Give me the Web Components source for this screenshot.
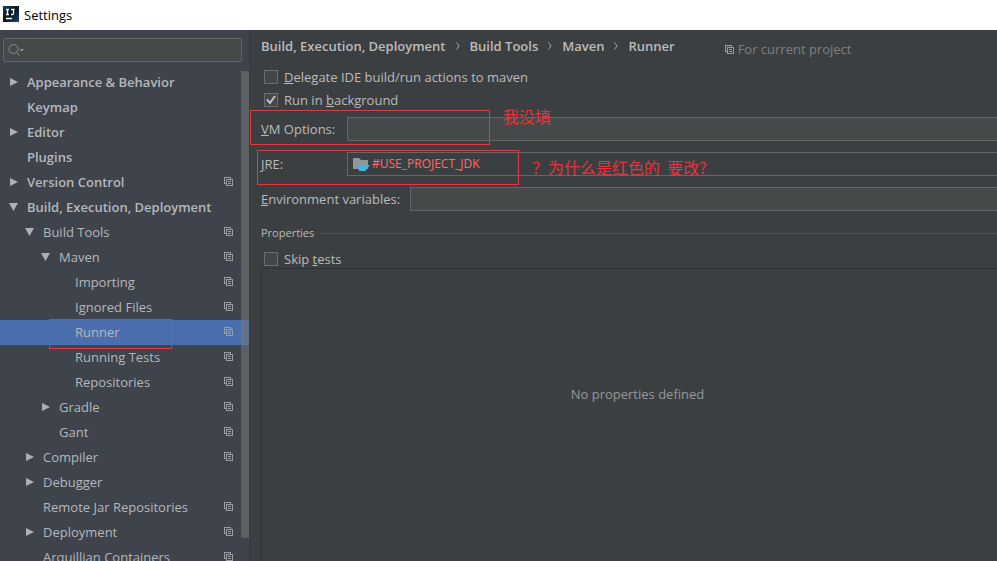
<!DOCTYPE html>
<html lang="en">
<head>
<meta charset="utf-8">
<title>Settings</title>
<style>
  html, body {
    height: 100%;
    margin: 0;
  }

  body {
    overflow: hidden;
    background: #3c3f41;
    font-family: "Open Sans", "Noto Sans CJK SC", sans-serif;
    font-size: 13px;
    line-height: 18px;
    color: #bbbbbb;
  }
</style>
</head>
<body>
<settings-window></settings-window>

<script>
// Small "project level setting" icon: two overlapping sheets
class ProjectIcon extends HTMLElement {
  constructor() {
    super();
    const shadow = this.attachShadow({ mode: 'open' });
    shadow.innerHTML = `
      <style>
        :host { display: block; flex: none; width: 9px; height: 9px; color: #9a9da1; }
        svg { display: block; }
      </style>
      <svg width="9" height="9" viewBox="0 0 9 9" fill="none" stroke="currentColor" shape-rendering="crispEdges">
        <path d="M1.5 6.5H.5V.5H6.5V1.5"/>
        <path d="M2.5 2.5H8.5V8.5H2.5ZM4 4.5H7M4 6.5H7"/>
      </svg>`;
  }
}
customElements.define('project-icon', ProjectIcon);

class TitleBar extends HTMLElement {
  constructor() {
    super();
    const shadow = this.attachShadow({ mode: 'open' });
    shadow.innerHTML = `
      <style>
        :host {
          display: flex;
          align-items: center;
          gap: 5px;
          flex: none;
          height: 30px;
          padding-left: 3px;
          background: #ffffff;
          color: #000000;
        }
        svg { display: block; margin-bottom: 2px; }
      </style>
      <svg width="16" height="16" viewBox="0 0 16 16">
        <defs>
          <linearGradient id="g" x1="0" y1="0" x2="1" y2="1">
            <stop offset="0" stop-color="#173d5c"/>
            <stop offset=".5" stop-color="#07131f"/>
            <stop offset="1" stop-color="#1b4a70"/>
          </linearGradient>
        </defs>
        <rect width="16" height="16" fill="url(#g)"/>
        <path d="M3 3.5H6M4.500 3.500V8.500M3 8.500H6M8 3.500H11.500M10.500 3.500V7.500Q10.500 8.500 9.500 8.500H8M3 12.500H9" fill="none" stroke="#fff" stroke-width="1.300"/>
      </svg>
      <slot></slot>`;
  }
}
customElements.define('title-bar', TitleBar);

class SearchBox extends HTMLElement {
  constructor() {
    super();
    const shadow = this.attachShadow({ mode: 'open' });
    shadow.innerHTML = `
      <style>
        :host {
          display: flex;
          align-items: center;
          box-sizing: border-box;
          height: 24px;
          padding-left: 4px;
          border: 1px solid #646768;
          border-radius: 2px;
          background: #45494a;
        }
        svg { flex: none; }
        input {
          flex: 1;
          min-width: 0;
          border: 0;
          outline: 0;
          background: transparent;
          font: inherit;
          color: inherit;
        }
      </style>
      <svg width="17" height="14" viewBox="0 0 17 14" fill="none" stroke="#8a8d8f">
        <circle cx="5.500" cy="6" r="4.500"/>
        <path d="M8.500 9.500L11.500 12.500"/>
        <path d="M11.500 6H16L13.700 8.500Z" fill="#8a8d8f" stroke="none"/>
      </svg>
      <input type="text" aria-label="Search settings">`;
  }
}
customElements.define('search-box', SearchBox);

// One line of the settings tree: level, state (open / closed), bold, project, selected
class TreeRow extends HTMLElement {
  constructor() {
    super();
    const shadow = this.attachShadow({ mode: 'open' });
    shadow.innerHTML = `
      <style>
        :host {
          display: flex;
          align-items: center;
          flex: none;
          box-sizing: border-box;
          height: 25px;
          padding: 0 16px 2px calc(9px + var(--level, 0) * 16px);
          color: #b4b8bd;
        }
        :host([bold]) { font-weight: 600; }
        :host([selected]) { background: #4b6eaf; }
        .arrow { flex: none; width: 18px; height: 10px; }
        .arrow path { display: none; fill: #adb1b6; }
        :host([state="closed"]) .closed,
        :host([state="open"]) .open { display: inline; }
        .text { flex: 1; white-space: nowrap; }
        project-icon { display: none; }
        :host([project]) project-icon { display: block; }
      </style>
      <svg class="arrow" viewBox="0 0 18 10">
        <path class="closed" d="M1 1L9 5L1 9Z"/>
        <path class="open" d="M0 1H9L4.500 9Z"/>
      </svg>
      <span class="text"><slot></slot></span>
      <project-icon></project-icon>`;
  }

  connectedCallback() {
    this.style.setProperty('--level', this.getAttribute('level') || 0);
  }
}
customElements.define('tree-row', TreeRow);

class SettingsSidebar extends HTMLElement {
  constructor() {
    super();
    const shadow = this.attachShadow({ mode: 'open' });
    shadow.innerHTML = `
      <style>
        :host {
          display: flex;
          flex-direction: column;
          flex: none;
          box-sizing: border-box;
          position: relative;
          width: 250px;
          padding-top: 8px;
          overflow: hidden;
          background: #3e434c;
          border-right: 1px solid #393c3f;
        }
        search-box { flex: none; margin: 0 7px 8px 3px; }
        .tree { display: flex; flex-direction: column; }
        /* Scrollbar thumb, over the rows */
        .thumb {
          position: absolute;
          top: 41px;
          right: 0;
          bottom: 23px;
          width: 8px;
          background: rgba(115, 117, 115, 0.6);
        }
      </style>
      <search-box></search-box>
      <div class="tree"><slot></slot></div>
      <div class="thumb"></div>`;
  }
}
customElements.define('settings-sidebar', SettingsSidebar);

class CheckRow extends HTMLElement {
  constructor() {
    super();
    const shadow = this.attachShadow({ mode: 'open' });
    shadow.innerHTML = `
      <style>
        :host { display: flex; height: 23px; padding-left: 3px; }
        label { display: flex; align-items: center; gap: 6px; }
        input {
          appearance: none;
          box-sizing: border-box;
          width: 14px;
          height: 14px;
          margin: 0;
          border: 1px solid #6b6e70;
          background: #43474a;
        }
        input:checked {
          background: #43474a url("data:image/svg+xml,%3Csvg xmlns='http://www.w3.org/2000/svg' viewBox='0 0 12 12'%3E%3Cpath d='M2 5.500L5 9L10 2' fill='none' stroke='%23c0c2c4' stroke-width='2'/%3E%3C/svg%3E") center / 12px 12px no-repeat;
        }
      </style>
      <label><input type="checkbox"><span><slot></slot></span></label>`;
  }

  connectedCallback() {
    this.shadowRoot.querySelector('input').checked = this.hasAttribute('checked');
  }
}
customElements.define('check-row', CheckRow);

// Label with a text box, or with the JRE drop-down when it has a value
class FieldRow extends HTMLElement {
  constructor() {
    super();
    const shadow = this.attachShadow({ mode: 'open' });
    shadow.innerHTML = `
      <style>
        :host { display: flex; align-items: center; height: 24px; }
        label { flex: none; box-sizing: border-box; min-width: 86px; padding-right: 10px; white-space: nowrap; }
        .box {
          display: flex;
          align-items: center;
          flex: 1;
          min-width: 0;
          box-sizing: border-box;
          height: 24px;
          border: 1px solid #646768;
          border-right: 0;
          background: #45494a;
        }
        .box.list { padding-left: 5px; gap: 3px; background: #3c3f41; }
        input, select {
          appearance: none;
          flex: 1;
          min-width: 0;
          padding: 0;
          border: 0;
          outline: 0;
          background: transparent;
          font: inherit;
          color: inherit;
        }
        select { color: #ff6b68; font-size: 12px; }
        svg { flex: none; }
      </style>
      <label for="field"><slot></slot></label>
      <div class="box"></div>`;
  }

  connectedCallback() {
    const box = this.shadowRoot.querySelector('.box');
    const value = this.getAttribute('value');
    if (value) {
      box.classList.add('list');
      box.innerHTML = `
        <svg width="16" height="16" viewBox="0 0 16 16">
          <path d="M0 2H6L8 4H15V13H0Z" fill="#8f979d"/>
          <path d="M4 9H16V11H14L13 14H6Z" fill="#40b6e0"/>
          <path d="M6 14H13V15H6Z" fill="#40b6e0"/>
        </svg>
        <select id="field"><option>${value}</option></select>`;
    } else {
      box.innerHTML = '<input id="field" type="text">';
    }
  }
}
customElements.define('field-row', FieldRow);

class BreadCrumbs extends HTMLElement {
  constructor() {
    super();
    const shadow = this.attachShadow({ mode: 'open' });
    shadow.innerHTML = `
      <style>
        :host { display: flex; align-items: center; height: 32px; white-space: nowrap; }
        .path { display: flex; font-weight: 600; gap: 10px; }
        .path svg { align-self: center; }
        .scope { display: flex; align-items: center; gap: 4px; margin-left: 50px; padding-top: 6px; color: #7c7f81; }
      </style>
      <div class="path"></div>
      <div class="scope"><project-icon></project-icon><slot></slot></div>`;
  }

  connectedCallback() {
    const arrow = '<svg width="4" height="8" viewBox="0 0 4 8" fill="none" stroke="#a5a7a9"><path d="M.5 .5L3 4L.5 7.500"/></svg>';
    this.shadowRoot.querySelector('.path').innerHTML = this.getAttribute('path')
      .split('/')
      .map((part) => `<span>${part}</span>`)
      .join(arrow);
  }
}
customElements.define('bread-crumbs', BreadCrumbs);

class RunnerPage extends HTMLElement {
  constructor() {
    super();
    const shadow = this.attachShadow({ mode: 'open' });
    shadow.innerHTML = `
      <style>
        :host {
          display: flex;
          flex-direction: column;
          flex: 1;
          min-width: 0;
          padding-left: 11px;
        }
        bread-crumbs { flex: none; margin-bottom: 3px; }
        .fields { display: flex; flex-direction: column; gap: 11px; margin: 6px 0 13px; }
        .group { display: flex; align-items: center; gap: 6px; font-size: 11px; }
        .group::after { content: ""; flex: 1; height: 1px; background: #515456; }
        .skip { margin-top: 5px; }
        .table {
          display: flex;
          flex: 1;
          justify-content: center;
          box-sizing: border-box;
          padding: 116px 0 0 16px;
          border: 1px solid #2e3133;
          border-width: 1px 0 0 1px;
          margin-top: -2px;
          color: #95989a;
        }
      </style>
      <bread-crumbs path="Build, Execution, Deployment/Build Tools/Maven/Runner">For current project</bread-crumbs>
      <check-row><u>D</u>elegate IDE build/run actions to maven</check-row>
      <check-row checked>Run in <u>b</u>ackground</check-row>
      <div class="fields">
        <field-row><u>V</u>M Options:</field-row>
        <field-row value="#USE_PROJECT_JDK"><u>J</u>RE:</field-row>
        <field-row><u>E</u>nvironment variables:</field-row>
      </div>
      <div class="group">Properties</div>
      <check-row class="skip">Skip <u>t</u>ests</check-row>
      <div class="table">No properties defined</div>`;
  }
}
customElements.define('runner-page', RunnerPage);

// Red marks drawn on top of the dialog
class MarkLayer extends HTMLElement {
  constructor() {
    super();
    const shadow = this.attachShadow({ mode: 'open' });
    shadow.innerHTML = `
      <style>
        :host { position: absolute; inset: 0; pointer-events: none; }
        .box { position: absolute; box-sizing: border-box; border: 1px solid #e03a45; }
        .note {
          position: absolute;
          font-family: "Noto Sans CJK SC", sans-serif;
          font-size: 16px;
          line-height: 20px;
          white-space: pre;
          color: #e8323d;
        }
        .vm { left: 250px; top: 110px; width: 240px; height: 35px; }
        .jre { left: 257px; top: 150px; width: 262px; height: 35px; }
        .runner { left: 49px; top: 319px; width: 123px; height: 30px; }
        .vm-note { left: 503px; top: 106px; }
        .jre-note { left: 532px; top: 157px; }
      </style>
      <div class="box vm"></div>
      <div class="box jre"></div>
      <div class="box runner"></div>
      <div class="note vm-note">我没填</div>
      <div class="note jre-note">？为什么是红色的  要改?</div>`;
  }
}
customElements.define('mark-layer', MarkLayer);

class SettingsWindow extends HTMLElement {
  constructor() {
    super();
    const shadow = this.attachShadow({ mode: 'open' });
    shadow.innerHTML = `
      <style>
        :host { display: flex; flex-direction: column; position: relative; height: 100vh; overflow: hidden; }
        .body { display: flex; flex: 1; min-height: 0; }
      </style>
      <title-bar>Settings</title-bar>
      <div class="body">
        <settings-sidebar>
          <tree-row bold state="closed">Appearance &amp; Behavior</tree-row>
          <tree-row bold>Keymap</tree-row>
          <tree-row bold state="closed">Editor</tree-row>
          <tree-row bold>Plugins</tree-row>
          <tree-row bold state="closed" project>Version Control</tree-row>
          <tree-row bold state="open">Build, Execution, Deployment</tree-row>
          <tree-row level="1" state="open" project>Build Tools</tree-row>
          <tree-row level="2" state="open" project>Maven</tree-row>
          <tree-row level="3" project>Importing</tree-row>
          <tree-row level="3" project>Ignored Files</tree-row>
          <tree-row level="3" project selected>Runner</tree-row>
          <tree-row level="3" project>Running Tests</tree-row>
          <tree-row level="3" project>Repositories</tree-row>
          <tree-row level="2" state="closed" project>Gradle</tree-row>
          <tree-row level="2" project>Gant</tree-row>
          <tree-row level="1" state="closed" project>Compiler</tree-row>
          <tree-row level="1" state="closed">Debugger</tree-row>
          <tree-row level="1" project>Remote Jar Repositories</tree-row>
          <tree-row level="1" state="closed" project>Deployment</tree-row>
          <tree-row level="1" project>Arquillian Containers</tree-row>
        </settings-sidebar>
        <runner-page></runner-page>
      </div>
      <mark-layer></mark-layer>`;
  }
}
customElements.define('settings-window', SettingsWindow);
</script>
</body>
</html>
